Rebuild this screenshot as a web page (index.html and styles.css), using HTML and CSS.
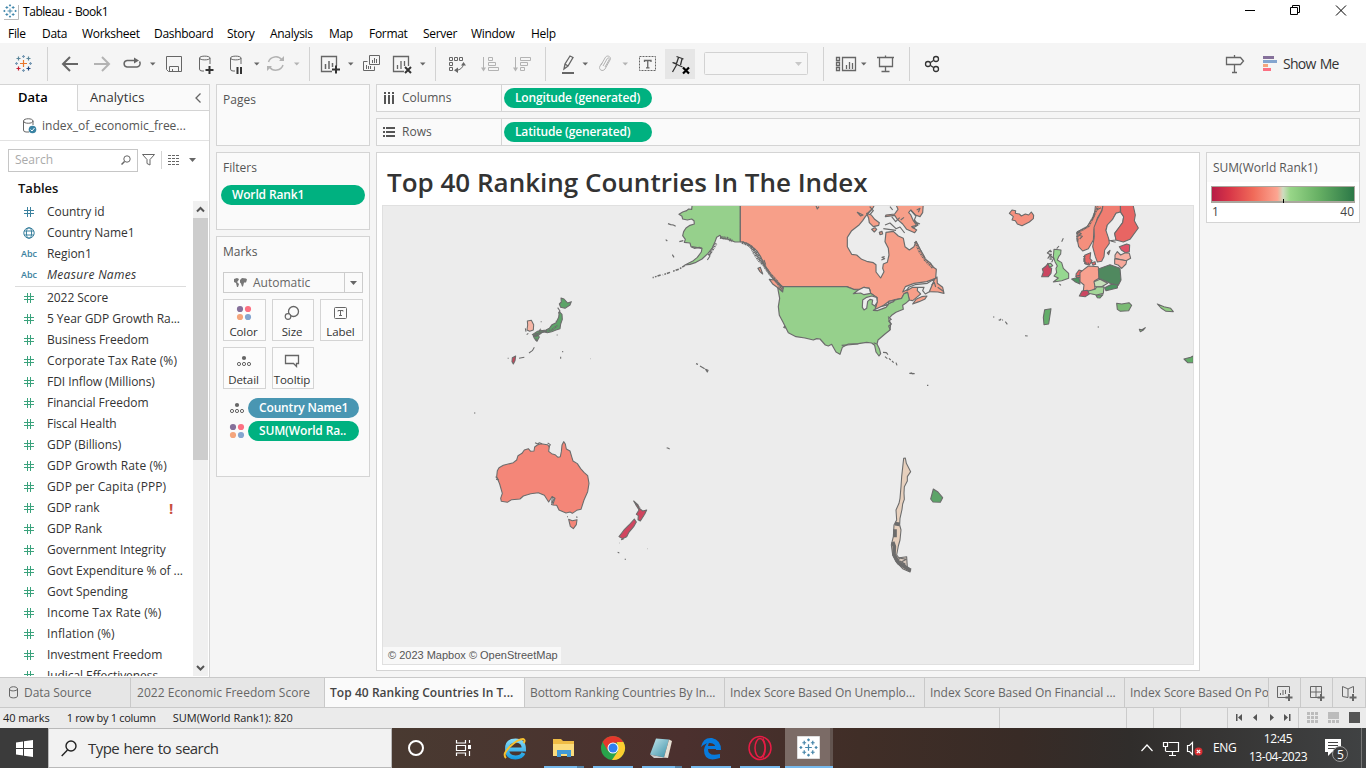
FILE: index.html
```html
<!DOCTYPE html>
<html lang="en">
<head>
<meta charset="utf-8">
<title>Tableau - Book1</title>
<link rel="stylesheet" href="styles.css">
</head>
<body>
<svg class="defs" aria-hidden="true">
  <defs>
    <symbol id="hash" viewBox="0 0 12 12"><path d="M4.500 1v10M7.500 1v10M1 4.500h10M1 7.500h10" fill="none" stroke="currentColor"/></symbol>
    <symbol id="globe" viewBox="0 0 12 12"><g fill="none" stroke="currentColor"><circle cx="6" cy="6" r="5.2"/><ellipse cx="6" cy="6" rx="2.6" ry="5.2"/><path d="M1 4h10M1 8h10"/></g></symbol>
    <symbol id="plus-burst" viewBox="0 0 20 20"><path d="M10 6.500v7M6.500 10h7M5.500 3v4M3.500 5h4M14.500 3v4M12.500 5h4M5.500 13v4M3.500 15h4M14.500 13v4M12.500 15h4M10 .5v3M8.500 2h3M10 16.500v3M8.500 18h3M2 8.500v3M.5 10h3M18 8.500v3M16.500 10h3" fill="none" stroke="currentColor" stroke-width="1.3"/></symbol>
    <symbol id="dots" viewBox="0 0 16 16"><circle cx="4" cy="4" r="3.100" fill="#85709a"/><circle cx="12" cy="4" r="3.100" fill="#fc7082"/><circle cx="4" cy="12" r="3.100" fill="#f4a57c"/><circle cx="12" cy="12" r="3.100" fill="#84a5cf"/></symbol>
    <symbol id="detail" viewBox="0 0 16 16"><circle cx="8" cy="5" r="2.100" fill="#666"/><g fill="none" stroke="#666"><circle cx="3" cy="11" r="1.600"/><circle cx="8" cy="11" r="1.600"/><circle cx="13" cy="11" r="1.600"/></g></symbol>
  </defs>
</svg>
<div class="app">
  <header class="titlebar">
    <svg class="app-icon" viewBox="0 0 16 16" width="16" height="16"><path d="M1 15.500h14.500V1" fill="none" stroke="#bbb"/><use href="#plus-burst" x="0" y="0" width="14" height="14" color="#3b82a8"/></svg>
    <span class="title-text">Tableau - Book1</span>
    <svg class="win-buttons" viewBox="1230 0 136 23" width="136" height="23" fill="none" stroke="#000"><path d="M1245 10.500h10M1290.500 7.500h7v7h-7zM1292.500 7v-1.500h7v7h-2M1336 5.500l10 10M1346 5.500l-10 10"/></svg>
  </header>
  <nav class="menu"><span>File</span><span>Data</span><span>Worksheet</span><span>Dashboard</span><span>Story</span><span>Analysis</span><span>Map</span><span>Format</span><span>Server</span><span>Window</span><span>Help</span></nav>

  <div class="toolbar">
    <svg viewBox="0 43 47 41"><g fill="none" stroke-width="1.200"><path d="M23.500 60v7M20 63.500h7" stroke="#e8762c"/><path d="M18.500 56.500v4M16.500 58.500h4M28.500 56.500v4M26.500 58.500h4" stroke="#5b879b"/><path d="M18.500 66.500v4M16.500 68.500h4" stroke="#c72035"/><path d="M28.500 66.500v4M26.500 68.500h4" stroke="#1f447e"/><path d="M23.500 55v3M22 56.500h3M16.500 62v3M15 63.500h3M30.500 62v3M29 63.500h3" stroke="#7b9bb5"/><path d="M23.500 69v3M22 70.500h3" stroke="#7b9bb5"/></g></svg>
    <i class="sep"></i>
    <svg viewBox="48 43 38 41"><path d="M78 64H63M70 57l-7 7 7 7" class="ink w2"/></svg>
    <svg viewBox="86 43 32 41"><path d="M94 64h15M102 57l7 7-7 7" class="pale w2"/></svg>
    <svg viewBox="118 43 27 41"><path d="M135 60.500h-8a3.500 3.300 0 0 0 0 6.500h10a3.500 3.500 0 0 0 2.500-5.500" class="ink w15"/><path d="M134 57.500v6l5-3z" fill="#666"/></svg>
    <svg viewBox="145 43 15 41"><path d="M150 62.500h5.500l-2.750 3z" fill="#666"/></svg>
    <svg viewBox="160 43 28 41"><path d="M166.500 56.500h15v15h-13l-2-2zM169.500 71.500v-5h9v5M172.500 69v2.500" class="ink"/></svg>
    <svg viewBox="188 43 34 41"><path d="M204 71h-2q-2.500 0-2.500-2V58c0-2.500 10.500-2.500 10.500 0v6M199.500 58c0 2.500 10.500 2.500 10.500 0" class="ink"/><path d="M209.500 66v8M205.500 70h8" stroke="#333" stroke-width="2"/></svg>
    <svg viewBox="222 43 26 41"><path d="M235 71h-2q-2.500 0-2.500-2V58c0-2.500 10.500-2.500 10.500 0v6M230.500 58c0 2.500 10.500 2.500 10.500 0" class="ink"/><path d="M237.500 67v7M241 67v7" stroke="#333" stroke-width="2"/></svg>
    <svg viewBox="248 43 15 41"><path d="M254 62.500h5.500l-2.750 3z" fill="#666"/></svg>
    <svg viewBox="263 43 25 41"><path d="M268.500 62a7.500 7 0 0 1 13.500-2M283 65a7.500 7 0 0 1-13.500 2" class="pale w15"/><path d="M279 61h5v-5zM272 66h-5v5z" fill="#b3b3b3"/></svg>
    <svg viewBox="288 43 21 41"><path d="M294 62.500h5.500l-2.750 3z" fill="#b3b3b3"/></svg>
    <i class="sep"></i>
    <svg viewBox="310 43 34 41"><path d="M332 71.500h-10.500v-15h15V66" class="ink w13"/><path d="M325.500 69v-5M329 69v-8M332.500 67v-4" class="ink w15"/><path d="M336 65.500v8M332 69.500h8" stroke="#333" stroke-width="2"/></svg>
    <svg viewBox="344 43 12 41"><path d="M348 62.500h5.500l-2.750 3z" fill="#666"/></svg>
    <svg viewBox="356 43 31 41"><path d="M369.500 55.500h10v9h-10zM367.500 61.500h-4v9h11v-4M372.500 63v-3M374.500 63v-5M376.500 63v-4M366.500 69v-4M368.500 69v-3M370.500 69v-3" class="ink"/></svg>
    <svg viewBox="387 43 29 41"><path d="M404 71.500h-10.500v-15h15V66M397.500 69v-4M401 69v-8M404.500 66v-5" class="ink w13"/><path d="M405 67l6 6M411 67l-6 6" stroke="#333" stroke-width="2"/></svg>
    <svg viewBox="416 43 19 41"><path d="M420 62.500h5.500l-2.750 3z" fill="#666"/></svg>
    <i class="sep"></i>
    <svg viewBox="436 43 38 41"><path d="M449.500 57.500h3v3h-3zM454.500 57.500h3v3h-3zM459.500 57.500h3v3h-3zM449.500 62.500h3v3h-3zM449.500 67.500h3v3h-3zM456 70.500q7-1 7.500-7" class="ink"/><path d="M458 67.500v5.500l-4-2.700zM461 65.500h5l-2.500-3.500z" fill="#666"/></svg>
    <svg viewBox="474 43 32 41"><path d="M483.500 57v12M488.500 57.500h4v3h-4zM488.500 62.500h7v3h-7zM488.500 67.500h10v3h-10z" class="pale"/><path d="M481 67.500h5l-2.500 4z" fill="#b3b3b3"/></svg>
    <svg viewBox="506 43 39 41"><path d="M515.500 57v12M520.500 57.500h10v3h-10zM520.500 62.500h7v3h-7zM520.500 67.500h4v3h-4z" class="pale"/><path d="M513 67.500h5l-2.500 4z" fill="#b3b3b3"/></svg>
    <i class="sep"></i>
    <svg viewBox="546 43 33 41"><path d="M564 69l1-5 5-8 3 1.500-5 8.500zM565 64l3 2" class="ink w13"/><path d="M562 73h12" stroke="#666" stroke-width="2"/></svg>
    <svg viewBox="579 43 14 41"><path d="M582.500 62.500h5.500l-2.750 3z" fill="#666"/></svg>
    <svg viewBox="593 43 24 41"><path d="M601 65l4-7c2-4 7-1 5 2l-5 9c-2 3-7 1-5-3l2-3M603 66l4-7c1-2 3-1 2 1l-4 7" class="pale"/></svg>
    <svg viewBox="617 43 17 41"><path d="M622.500 62.500h5.500l-2.750 3z" fill="#b3b3b3"/></svg>
    <svg viewBox="634 43 31 41"><path d="M639.500 56.500h16v14h-16z" class="ink" stroke-dasharray="2 1"/><path d="M644.500 62v-1.500h6.500V62M647.750 60.500v7.500M646 67.800h3.500" class="ink w13"/></svg>
    <svg class="pressed" viewBox="665 43 30 41"><path d="M676.500 56.500l7 2.500M678.500 57.500l-2 6M682 59l-1.500 6M672.500 62.500l10 4.500M676.500 63.500l-3.500-1M676.500 65l-4 7" class="dark w13"/><path d="M683 67.500l6 6M689 67.500l-6 6" stroke="#000" stroke-width="2.200"/></svg>
    <svg viewBox="695 43 128 41"><rect x="704.500" y="52.500" width="103" height="22" rx="1" fill="#f6f6f6" stroke="#d2d2d2"/><path d="M795 62h7l-3.500 4z" fill="#c8c8c8"/></svg>
    <i class="sep"></i>
    <svg viewBox="824 43 34 41"><path d="M836.500 57.500h3v3h-3zM836.500 62.500h3v3h-3zM836.500 67.500h3v3h-3zM842.500 57.500h13v13h-13zM846.500 69v-4M849.500 69v-7M852.500 69v-6" class="ink w13"/></svg>
    <svg viewBox="858 43 12 41"><path d="M861 62.500h5.500l-2.750 3z" fill="#666"/></svg>
    <svg viewBox="870 43 39 41"><path d="M877 57.500h17M879.500 57.500v9h13v-9M885.500 55.500v2M885.500 67v5M881.500 71.500h8" class="ink w13"/></svg>
    <i class="sep"></i>
    <svg viewBox="910 43 44 41"><path d="M930.500 62.500l3-2M930.500 65.500l3 2" class="dark w13"/><g class="dark w13"><circle cx="928" cy="64" r="2.500"/><circle cx="936" cy="59" r="2.500"/><circle cx="936" cy="69" r="2.500"/></g></svg>
    <span></span>
    <svg viewBox="1220 43 30 41"><path d="M1226.500 57.500h14l3 3.500-3 3.500h-14zM1234.500 55v2M1234.500 65v7.500M1232 72.500h5" class="ink w13"/></svg>
    <div class="showme"><svg viewBox="0 0 14 16" width="14" height="16"><path d="M0 0h11v3H0z" fill="#85709a"/><path d="M0 4h14v3H0z" fill="#84a5cf"/><path d="M0 8h5v3H0z" fill="#f4a57c"/><path d="M0 12h8v3H0z" fill="#fc7082"/></svg><span>Show Me</span></div>
  </div>

  <main class="workspace">
    <aside class="datapane">
      <div class="pane-tabs"><b>Data</b><div class="analytics"><span>Analytics</span><svg width="8" height="12" viewBox="0 0 8 12"><path d="M6.500 1.500L2 6l4.500 4.500" class="ink w13"/></svg></div></div>
      <div class="source"><svg width="14" height="16" viewBox="0 0 14 16"><path d="M6 14H3Q.5 14 .5 12V3C.5 0 10 0 10 3v4M.5 3c0 3 9.500 3 9.500 0" class="ink"/><circle cx="9.500" cy="11.500" r="3.800" fill="#3a83a3"/><path d="M7.500 11.500l1.500 1.500 2.500-3" fill="none" stroke="#fff"/></svg><span>index_of_economic_free...</span></div>
      <div class="searchrow"><div class="search"><span>Search</span><svg width="10" height="10" viewBox="0 0 10 10"><circle cx="6" cy="4" r="3.200" class="ink"/><path d="M3.500 6.500L.5 9.500" class="ink w15"/></svg></div>
        <svg width="60" height="18" viewBox="142 151 60 18"><path d="M142.500 154.500h12l-4.500 5v5.500l-3-1.500v-4z" class="ink"/><path d="M161.500 151v18" stroke="#d4d4d4"/><path d="M168 155.500h12M168 158.500h12M168 161.500h12M168 164.500h12" stroke="#666" stroke-dasharray="3 1"/><path d="M189 158h7l-3.500 4z" fill="#666"/></svg></div>
      <h3>Tables</h3>
      <div class="fieldwrap">
        <ul class="fields">
          <li class="dim"><svg><use href="#hash"/></svg><span>Country id</span></li>
          <li class="dim"><svg><use href="#globe"/></svg><span>Country Name1</span></li>
          <li class="dim"><em>Abc</em><span>Region1</span></li>
          <li class="dim last"><em>Abc</em><span class="it">Measure Names</span></li>
          <li><svg><use href="#hash"/></svg><span>2022 Score</span></li>
          <li><svg><use href="#hash"/></svg><span>5 Year GDP Growth Ra...</span></li>
          <li><svg><use href="#hash"/></svg><span>Business Freedom</span></li>
          <li><svg><use href="#hash"/></svg><span class="wide">Corporate Tax Rate (%)</span></li>
          <li><svg><use href="#hash"/></svg><span>FDI Inflow (Millions)</span></li>
          <li><svg><use href="#hash"/></svg><span>Financial Freedom</span></li>
          <li><svg><use href="#hash"/></svg><span>Fiscal Health</span></li>
          <li><svg><use href="#hash"/></svg><span>GDP (Billions)</span></li>
          <li><svg><use href="#hash"/></svg><span class="wide">GDP Growth Rate (%)</span></li>
          <li><svg><use href="#hash"/></svg><span class="wide">GDP per Capita (PPP)</span></li>
          <li><svg><use href="#hash"/></svg><span>GDP rank</span><b class="warn">!</b></li>
          <li><svg><use href="#hash"/></svg><span>GDP Rank</span></li>
          <li><svg><use href="#hash"/></svg><span>Government Integrity</span></li>
          <li><svg><use href="#hash"/></svg><span>Govt Expenditure % of ...</span></li>
          <li><svg><use href="#hash"/></svg><span>Govt Spending</span></li>
          <li><svg><use href="#hash"/></svg><span class="wide">Income Tax Rate (%)</span></li>
          <li><svg><use href="#hash"/></svg><span class="wide">Inflation (%)</span></li>
          <li><svg><use href="#hash"/></svg><span>Investment Freedom</span></li>
          <li><svg><use href="#hash"/></svg><span>Judical Effectiveness</span></li>
        </ul>
        <div class="scroll"><svg width="15" height="17" viewBox="0 0 15 17"><path d="M4 10.500L7.500 7l3.500 3.500" fill="none" stroke="#555" stroke-width="2"/></svg><i></i><svg width="15" height="17" viewBox="0 0 15 17"><path d="M4 7l3.500 3.500L11 7" fill="none" stroke="#555" stroke-width="2"/></svg></div>
      </div>
    </aside>

    <section class="cards">
      <div class="card pages"><h4>Pages</h4></div>
      <div class="card filters"><h4>Filters</h4><div class="pill">World Rank1</div></div>
      <div class="card marks"><h4>Marks</h4>
        <div class="marktype"><svg width="13" height="10" viewBox="0 0 13 10"><path d="M0 1l3-1 2 1-1 2-1 1 2 2-1 3-1 0-1-4-2-1zM6 2l2-2 4 .5 1 1-1 3-2 0-1 4-1 0-1-3-1-1z" fill="#777"/></svg><span>Automatic</span><i><svg width="7" height="4"><path d="M0 0h7L3.500 4z" fill="#666"/></svg></i></div>
        <div class="buttons">
          <div><svg width="16" height="16"><use href="#dots"/></svg><span>Color</span></div>
          <div><svg width="16" height="16" viewBox="0 0 16 16"><circle cx="9.500" cy="6.500" r="5" class="ink w13"/><circle cx="4" cy="11.500" r="2.800" fill="#fafafa" stroke="#666" stroke-width="1.200"/></svg><span>Size</span></div>
          <div><svg width="16" height="16" viewBox="0 0 16 16"><rect x="1.500" y="2.500" width="12" height="11" rx="1" class="ink"/><path d="M5 6.500v-1h5v1M7.500 5.500v5M6 10.500h3" class="ink"/></svg><span>Label</span></div>
          <div><svg width="16" height="16"><use href="#detail"/></svg><span>Detail</span></div>
          <div><svg width="16" height="16" viewBox="0 0 16 16"><path d="M1.500 2.500h13v8h-2v3l-3-3h-8z" class="ink w13"/></svg><span>Tooltip</span></div>
        </div>
        <div class="shelfrow"><svg width="16" height="16"><use href="#detail"/></svg><div class="pill blue">Country Name1</div></div>
        <div class="shelfrow"><svg width="16" height="16"><use href="#dots"/></svg><div class="pill">SUM(World Ra..</div></div>
      </div>
    </section>

    <section class="canvas">
      <div class="shelf"><div class="shelf-name"><svg width="12" height="13" viewBox="0 0 12 13"><path d="M1 0h2v2H1zM5 0h2v2H5zM9 0h2v2H9zM1 3h2v9H1zM5 3h2v9H5zM9 3h2v9H9z" fill="#555"/></svg><span>Columns</span></div><div class="pill">Longitude (generated)</div></div>
      <div class="shelf"><div class="shelf-name"><svg width="12" height="12" viewBox="0 0 12 12"><path d="M0 1h2v2H0zM0 5h2v2H0zM0 9h2v2H0zM3 1h9v2H3zM3 5h9v2H3zM3 9h9v2H3z" fill="#555"/></svg><span>Rows</span></div><div class="pill lat">Latitude (generated)</div></div>
      <div class="viewrow">
        <div class="sheet">
          <h1>Top 40 Ranking Countries In The Index</h1>
          <div class="mapbox">
          <svg class="map" viewBox="383 206 810 458" width="810" height="458">
            <g transform="translate(640 200) scale(.33333)" stroke="#6c6c6c" stroke-width="3.500" stroke-linejoin="round">
              <path fill="#96d08c" d="M157 10L155 28 146 27 140 32 128 36 117 43 126 49 128 57 142 60 155 57 162 62 163 72 150 76 138 84 131 95 128 107 136 118 133 127 150 129 153 140 163 145 178 142 186 145 184 156 172 172 160 182 135 195 150 193 168 187 186 177 204 160 217 144 225 125 230 112 240 106 246 115 262 117 275 122 285 126 301 126V10z"/>
              <path fill="#f79f89" d="M301 10V125L320 130 335 140 350 152 362 170 373 195 385 215 400 237 428 260H620L640 267 660 268 672 262 688 265 692 280 708 292 712 305 705 330 720 324 745 305 765 299 785 295 792 282 802 277 808 300 818 302 830 292 842 282 832 272 833 262 815 262 800 270 788 276 796 260 822 250 860 245 887 235 889 208 878 200 872 190 856 178 850 164 842 150 828 124 822 140 808 150 795 140 790 115 775 108 760 94 738 97 735 125 745 145 747 165 742 187 730 192 728 205 732 215 722 234 708 216V194L700 188 680 184 665 178 650 165 635 163 622 140V112L635 92 658 74 668 62 676 50 688 36 700 22 705 10z"/>
              <path fill="#f79f89" d="M680 40L686 55 688 68 700 80 716 76 718 68 704 58 694 45zM736 50L764 46 772 58 788 72 800 88 824 98 830 90 815 80 830 76 820 62 812 44 806 38 812 30 826 45 840 50 848 38 850 10H766L774 28 764 42 738 45zM652 37l17 8-7 3zM695 88l10-5 5 5-7 8zM718 97l8-3 2 8-8 2zM867 275l14-35 10-9 1 19 16 12 4 18-18-4zM818 312l10-14 17-8 16-2-7 10-17 7zM354 205l7-3 7 20-8-7zM388 238l15 2 28 24-3 10-29-21z"/>
              <path fill="#ececec" d="M800 272L806 262 825 254 862 250 884 236 868 275 856 282 848 272 852 262 838 262 818 262z"/>
              <path fill="#96d08c" d="M413 263L428 276 430 260H620L640 268 655 270 688 265 692 280 712 293 705 330 745 312 765 300 785 295 792 281 803 277 808 300 797 310 788 316 790 328 768 337 755 346 746 356 752 372 750 390 735 402 714 420 711 432 718 446 722 461 717 468 708 456 704 436 695 429 680 427 655 431 625 432 607 442 600 463 588 456 575 433 565 438 556 435 540 417 530 416 520 420 495 414 468 410 445 398 430 368 418 346 415 320 419 295z"/>
              <path fill="#ececec" d="M640 281L655 270 672 262 688 265 692 280 672 284 662 279zM668 300L680 292 695 288 710 292 712 306 704 318 696 312 698 300 690 298 683 304 680 325 672 330 667 322zM700 331L722 320 745 314 738 322 712 332zM745 310l14-4 5-5-18 3z"/>
              <g fill="none">
              <path d="M135 196l-17 11-20 7M90 217l-22 8M62 225l-24 8" stroke-dasharray="10 3 5 4" stroke-width="4.500"/>
              <path d="M84 71l8 3 8 1 7 4M77 119l5 4M97 164l5 8M118 125l12-3M202 180l8-12M207 167l8-12M168 491l6 2M180 498l14 8M197 508l7 3-2 5zM710 432l-9-4M729 457l10 1 5 6M735 470l7 6M747 475l5 5M756 483l5 5M768 488l3 8M808 520l16 1M812 518l8 5M861 556h4M528 17l4 10 5-7M372 180l5 14M744 350l10 8-8 5 8 9-8 6 5 12M812 30l16 18-6 14 12 13-16 10M830 30l10-5-5 12M689 20l11 12-9 10M875 255l8-8 4 14M893 262l17 12M724 180l10-4-8-4 8-2M605 436l50-4M155 140l30 5M680 42l15-13M755 50l12 15 12-12M735 75l15-6 18 17 12-5 14 18M730 86l38 5M435 378l-4 4 6 3M822 58l8 10 10 4M782 60l10-8M750 20l8 10"/>
              <path d="M306 127L325 134 342 148 354 166 366 184 376 202 390 222 408 242 428 268" stroke-width="9" stroke-dasharray="5 1.500 3 1"/>
              <path d="M332 138L342 158 356 180 368 192M206 166L216 150 228 130M240 112l22 3 14 8M826 125l14 30 16 25 24 24" stroke-width="9" stroke-dasharray="4 2 2 2"/>
              </g>
            </g>
            <g transform="translate(980 200) scale(.33333)" stroke="#696969" stroke-width="3.200" stroke-linejoin="round">
              <path fill="#f58f7d" d="M88 40L96 30 107 32 106 40 118 42 124 48 136 42 146 45 154 36 161 46 160 56 148 66 126 77 112 72 106 62 96 60 100 50z"/>
              <path fill="#f58f7d" d="M347 10L343 48 330 66 320 82 292 95 291 115 296 140 308 153 325 146 340 120 342 90 352 55 366 30 370 10z"/>
              <path fill="#f07d71" d="M370 10L366 32 352 58 342 82 343 110 338 140 346 170 352 186 365 184 372 170 374 150 388 130 386 110 378 90 382 75 398 58 408 40 421 36V10z"/>
              <path fill="#ececec" d="M421 36L431 50 428 68 416 84 404 100 408 120 388 122 378 92 382 75 398 58 408 40z"/>
              <path fill="#e86563" d="M421 10L422 36 431 50 428 68 416 84 404 100 408 120 430 126 450 118 475 84 463 62 466 45 458 10z"/>
              <path fill="#df5266" d="M418 140L440 132 449 135 448 155 436 158 424 150z"/>
              <path fill="#e86563" d="M314 166L328 160 332 158 330 176 336 182 328 195 316 192 313 180zM335 188l10-3 2 8-8 3zM382 159l8-8-4 13zM288 222L297 210 305 212 303 232 290 234z"/>
              <path fill="#f7b0a3" d="M405 165L412 155 422 165 436 158 448 160 452 175 438 182 405 175z"/>
              <path fill="#f7a89a" d="M404 176L440 182 438 192 425 205 414 195 404 192z"/>
              <path fill="#f7a18f" d="M300 218L312 208 325 198 354 200 358 210 357 235 343 243 345 265 335 273 310 272 312 255 300 245z"/>
              <path fill="#50895f" d="M355 207L390 194 420 205 423 240 415 256 390 250 357 235z"/>
              <path fill="#c5dfb9" d="M342 245L360 238 383 250 365 260 345 260z"/>
              <path fill="#a3d698" d="M325 273L345 268 350 261 372 260 370 280 350 285 325 280z"/>
              <path fill="#96d890" d="M222 148L243 150 242 162 236 170 232 180 245 188 250 205 266 220 266 235 245 242 220 246 235 234 222 228 230 218 228 205 232 198 225 185 220 170zM203 192L212 190 218 197 208 202z"/>
              <path fill="#4c9460" d="M275 237L297 232 300 252 285 245zM374 263L395 253 413 255 412 264 378 272z"/>
              <path fill="#cb4661" d="M185 230L190 216 187 207 198 198 204 190 208 202 215 205 213 220 205 230zM298 288L306 273 322 271 328 282 316 290z"/>
              <path fill="#63ad69" d="M194 329L213 326 206 372 192 374 190 352zM348 286L369 284 360 294 352 293zM612 477l20-5 8-4v20h-17z"/>
              <path fill="#7aba74" d="M410 310l15 2 22-4 8 8-9 16-25 2-9-6z"/>
              <path fill="#91cd83" d="M532 312l20 8 20 5 8 10-22-1-15-10z"/>
              <path fill="#88c27f" d="M478 388l8 1 10-6-7 8-8 4z"/>
              <path fill="none" d="M250 115l-5 10M237 138l-7 8M212 150l-10 9 9 5-8 12M210 165l11 10-6 12M238 252l5 4M39 351h4M56 359l4 2 3-5M66 359l3 2M76 365l6 8M135 407l8 1M353 381h4M292 95l12 6-9 5 12 3-8 8M350 30l13-7M337 60l7-25M285 229l15-3M392 123l15 4"/>
              <path fill="none" d="M356 14L338 55 326 78 292 98 293 125M313 168v20l14 4M212 152v30" stroke-width="7" stroke-dasharray="4 2 2 2"/>
            </g>
            <g transform="translate(460 280) scale(.33333)" stroke="#6c6c6c" stroke-width="3.200" stroke-linejoin="round">
              <path fill="#f48678" d="M112 572L117 563 130 556 160 548 170 540 174 527 186 520 193 510 205 506 212 514 222 513 224 501 232 495 243 491 262 494 268 500 266 514 275 521 285 524 294 532 301 530 304 515 306 495 311 485 316 492 319 507 330 513 335 530 339 543 352 551 362 566 372 577 383 587 387 610 383 635 372 660 363 688 350 691 337 700 330 696 318 699 297 690 290 676 278 675 285 655 276 650 266 666 253 646 235 638 212 641 190 648 180 657 155 659 142 667 124 664 122 655 127 640 119 612 110 590zM326 718l11 4 14-3-2 15-9 12-9-7z"/>
              <path fill="#5ca468" d="M303 54l9 3 11 12 11-4-4 10-15 10-13-3-4-10 6-6zM298 95L306 103 307 118 302 132 300 146 288 150 275 155 262 158 250 155 238 164 226 170 217 164 232 154 258 150 268 145 276 134 288 128 296 112zM220 168l12-4 6 7-7 13-8-9z"/>
              <path fill="#f6b5a5" d="M202 123l12-2 7 13-1 16-11 4-8-4 2-15z"/>
              <path fill="#c84559" d="M157 233l10-5-2 14-5 10-4-7z"/>
              <path fill="#d1455f" d="M521 663L534 675 538 685 548 693 560 690 554 703 541 723 534 719 535 707 529 703 537 690 533 683zM523 717L529 726 521 740 506 758 500 770 487 776 477 770 492 750 507 735z"/>
              <path fill="none" d="M293 83l7 10-5 7M223 163l39-10M227 182l2-7M223 202l-6 10-10 7M177 235l16-3M143 235h3M302 230v6M308 213v4M391 236h1M42 399h4M620 503l5 2 4 2M473 817l5 2M494 838h4M562 806h1M478 789h1M321 710h3M350 709l1 5M107 590l8 9M108 598l9 2M225 488l9 4 4-4 8 3M263 489l8 5-5 8M275 670l2-20 6 5-9 20M198 155l-2-10M287 124h3M242 125h3M483 779l8-2M242 146l-5 8 8-3M205 160l-5 4M290 165h3"/>
              <path fill="none" d="M220 166l30-12 25-4 18-14M528 672l12 14" stroke-width="6" stroke-dasharray="4 2 2 2"/>
            </g>
            <g transform="translate(870 430) scale(.33333)" stroke="#6c6c6c" stroke-width="3.200" stroke-linejoin="round">
              <path fill="#e7d0bd" d="M101 85L106 84 109 100 122 125 112 140 112 153 103 170 102 190 103 208 98 222 96 238 90 265 89 285 93 300 90 330 85 348 80 375 92 390 110 413 122 420 120 426 98 416 78 395 68 375 64 345 70 320 72 285 80 270 78 240 87 220 90 205 93 170 95 140z"/>
              <path fill="#5ca468" d="M190 177l14 9 14 17-7 14-22-1-7-9z"/>
              <path fill="#d9c9bd" d="M88 383l22-3 2 32-28-13z"/>
              <path fill="none" d="M75 281l14 2M75 298v24M68 336l5 13-1 25 14 25 22 14 14 8" stroke-width="11"/>
              <path fill="none" d="M87 384l22 4-15 8 12 6M90 393l18 14"/>
            </g>
          </svg><span class="copyright">© 2023 Mapbox © OpenStreetMap</span>
          </div>
        </div>
        <div class="legend"><h4>SUM(World Rank1)</h4><div class="ramp"></div><div class="range"><span>1</span><span>40</span></div></div>
      </div>
    </section>
  </main>

  <div class="sheettabs">
    <div><svg width="9" height="13" viewBox="0 0 9 13"><path d="M.5 3v7c0 2.500 8 2.500 8 0V3c0-3-8-3-8 0s8 2 8 0" class="ink"/></svg><span>Data Source</span></div>
    <div><span class="t2">2022 Economic Freedom Score</span></div>
    <div class="active"><span>Top 40 Ranking Countries In T...</span></div>
    <div><span>Bottom Ranking Countries By In...</span></div>
    <div><span>Index Score Based On Unemplo...</span></div>
    <div><span>Index Score Based On Financial ...</span></div>
    <div class="cut"><span>Index Score Based On Po</span></div>
    <div class="add"><svg width="16" height="16" viewBox="0 0 16 16"><path d="M9 12.500H.5v-11h12V8M3.500 10V8M6 10V5M8.500 9V5" class="ink"/><path d="M12 9v7M8.500 12.500h7" class="ink w2"/></svg></div>
    <div class="add"><svg width="16" height="16" viewBox="0 0 16 16"><path d="M9 12.500H1.500v-11h11V9M7 1.500v11M1.500 7h11" class="ink"/><path d="M12 9v7M8.500 12.500h7" class="ink w2"/></svg></div>
    <div class="add"><svg width="16" height="16" viewBox="0 0 16 16"><path d="M7 12.500l-5.500-1v-10L5 3l2 1 2-1 3.500-1.500V8M7 4v8.500" class="ink"/><path d="M12 9v7M8.500 12.500h7" class="ink w2"/></svg></div>
  </div>
  <div class="status"><span>40 marks</span><span>1 row by 1 column</span><span>SUM(World Rank1): 820</span>
    <svg viewBox="999 708 367 20" width="367" height="20"><path d="M999.500 708v20M1126.500 708v20M1153.500 708v20M1180.500 708v20M1227.500 708v20M1298.500 708v20" stroke="#cbcbcb"/><path d="M1236 714h1.500v7h-1.500zM1242 714v7l-4-3.500zM1257 714v7l-4-3.500zM1270 714v7l4-3.500zM1284 714v7l4-3.500zM1289 714h1.500v7H1289z" fill="#555"/><path d="M1307 712h3v3h-3zM1311 712h3v3h-3zM1315 712h3v3h-3zM1307 716h3v3h-3zM1311 716h3v3h-3zM1315 716h3v3h-3zM1307 720h3v3h-3zM1311 720h3v3h-3zM1315 720h3v3h-3zM1328 712h11v7h-11zM1328 720h3v3h-3zM1332 720h3v3h-3zM1336 720h3v3h-3z" fill="#bcbcbc"/><path d="M1349 712h11v11h-11z" fill="#555"/></svg>
  </div>

  <footer class="taskbar">
    <div class="start"><svg width="17" height="17" viewBox="0 0 17 17"><path d="M0 2.500l7-1V8H0zM8 1.300L17 0v8H8zM0 9h7v6.500l-7-1zM8 9h9v8l-9-1.300z" fill="#fff"/></svg></div>
    <div class="winsearch"><svg width="16" height="17" viewBox="0 0 16 17"><circle cx="10" cy="6" r="5" fill="none" stroke="#222" stroke-width="1.400"/><path d="M6.500 10L.7 16" stroke="#222" stroke-width="1.400"/></svg><span>Type here to search</span></div>
    <svg class="apps" viewBox="392 728 442 40" width="442" height="40">
      <defs><linearGradient id="gie" gradientUnits="userSpaceOnUse" x1="0" y1="738" x2="0" y2="759"><stop stop-color="#8de0fb"/><stop offset="1" stop-color="#159be0"/></linearGradient><linearGradient id="gnote" x1="0" x2="1" y2="1"><stop stop-color="#c5e8ee"/><stop offset="1" stop-color="#3b8fa6"/></linearGradient></defs>
      <circle cx="416" cy="748" r="7" fill="none" stroke="#fff" stroke-width="2"/>
      <path d="M456.500 740v3h9v-3M456.500 756v-3h9v3M456.500 745.500h9v5h-9zM469.500 740v3M469.500 751v5" fill="none" stroke="#fff" stroke-width="1.200"/><path d="M468 745h3v4h-3z" fill="#fff"/>
      <path d="M508 749.500h16q0-9-8.500-9t-8.500 8.500 8.500 8.500q6 0 8-4.500" fill="none" stroke="url(#gie)" stroke-width="4"/><path d="M506 758q-4-4 4-11.500 8-7.500 13-7.500 3 1 .5 4" fill="none" stroke="#f5c032" stroke-width="2"/>
      <path d="M553 739h8l2 2h11v15h-21z" fill="#efbc45"/><path d="M553 744h21v12h-21z" fill="#fbdc7d"/><path d="M557 757v-7h14v7h-4v-3h-6v3z" fill="#429ad7"/>
      <circle cx="613" cy="748" r="12" fill="#28a44b"/><path d="M602.600 742a12 12 0 0 1 20.800 0L613 743l-5 8z" fill="#e5372c"/><path d="M623.400 742a12 12 0 0 1-11.400 18l6-9-1-9z" fill="#fccd30"/><circle cx="613" cy="748" r="5.500" fill="#fff"/><circle cx="613" cy="748" r="4.500" fill="#317ff0"/>
      <path d="M656 738.500l13 1-5 18-14-3z" fill="url(#gnote)"/><path d="M669 739.500l3 1.500-4 17-4-.500z" fill="#e7e0d4"/><path d="M650 754.500l14 3 4 .5-14 0z" fill="#ccc"/>
      <path d="M703 747q3-8 10-7 7 1 7 9h-12q0 8 12 5v4q-16 5-16-8 1-7 6-8-2 2-2 4h7q-1-4-4-4-6 0-8 5zM701 747q2-10 11-9 9 2 9 12h-5q0-7-6-7-5 0-9 4z" fill="#087bdd"/>
      <ellipse cx="760" cy="748" rx="11" ry="11.500" fill="none" stroke="#e81c45" stroke-width="1.500"/><ellipse cx="760" cy="748" rx="5" ry="9.500" fill="none" stroke="#e81c45" stroke-width="1.500"/><path d="M763 738q5 10 0 20" fill="none" stroke="#e81c45"/>
      <path d="M785 728h45v40h-45z" fill="#7b6b66"/><path d="M830 728h3v40h-3z" fill="#62544f"/><path d="M797.500 736.500h22v22h-22z" fill="#fff" stroke="#ddd"/><use href="#plus-burst" x="799" y="738" width="19" height="19" color="#4585a9"/>
      <path d="M544 766h33v2h-33zM593 766h40v2h-40zM642 766h33v2h-33zM691 766h40v2h-40zM740 766h40v2h-40zM785 766h48v2h-48z" fill="#76b9ed"/><path d="M577 766h7v2h-7zM675 766h7v2h-7z" fill="#5484a9"/>
    </svg>
    <div class="tray">
      <svg viewBox="1138 728 70 40" width="70" height="40" fill="none" stroke="#fff" stroke-width="1.200"><path d="M1141.500 751l5.500-6 5.500 6M1168.500 742.500h10v9h-13M1172.500 752v3M1169 755.500h7M1163.500 742.500h4v4h-4zM1165.500 747v4M1187.500 745.500h2l3-3v12l-3-3h-2z"/><circle cx="1198.500" cy="751.500" r="4" fill="#d92e32" stroke="none"/><path d="M1196.800 749.800l3.400 3.400M1200.200 749.800l-3.400 3.400"/></svg>
      <span class="lang">ENG</span><div class="clock"><span>12:45</span><span>13-04-2023</span></div>
      <svg class="note" width="30" height="30" viewBox="0 0 30 30"><path d="M2 3h16v13h-9l-4 4v-4H2z" fill="#fff"/><path d="M5 6.500h10M5 9.500h10M5 12.500h7" stroke="#444"/><circle cx="17" cy="18" r="7.500" fill="#3c3c3c" stroke="#999"/><text x="14" y="22.500" class="badge">5</text></svg>
      <i class="desk"></i>
    </div>
  </footer>
</div>
</body>
</html>
```
FILE: styles.css
```css
* { box-sizing: border-box; }
body { margin: 0; width: 1366px; height: 768px; overflow: hidden; font: 12px/16px "Open Sans", sans-serif; color: #333; }
h1, h3, h4, ul { margin: 0; padding: 0; font-weight: normal; }
.defs { position: absolute; width: 0; height: 0; }
.app { display: grid; grid-template-rows: 23px 20px 41px 593px 31px 20px 40px; width: 1366px; height: 768px; background: #f5f5f5; }
.ink { fill: none; stroke: #666; }
.pale { fill: none; stroke: #b3b3b3; }
.dark { fill: none; stroke: #333; }
.w13 { stroke-width: 1.3; }
.w15 { stroke-width: 1.5; }
.w2 { stroke-width: 2; }

.titlebar { display: flex; align-items: center; background: #fff; color: #000; }
.app-icon { margin: 0 4px 0 3px; }
.title-text { letter-spacing: -.45px; word-spacing: 1px; padding-top: 1px; }
.win-buttons { margin-left: auto; }
.menu { display: grid; grid-template-columns: 34px 40px 72px 73px 43px 59px 40px 54px 48px 60px 40px; align-items: center; padding: 2px 0 0 8px; background: #fff; color: #000; letter-spacing: -.3px; }

.toolbar { display: grid; grid-template-columns: 47px 1px 38px 32px 27px 15px 28px 34px 26px 15px 25px 21px 1px 34px 12px 31px 29px 19px 1px 38px 32px 39px 1px 33px 14px 24px 17px 31px 30px 128px 1px 34px 12px 39px 1px 44px 1fr 30px 116px; height: 41px; }
.toolbar > svg { width: 100%; height: 41px; }
.toolbar > .pressed { background: linear-gradient(#e6e6e6, #e6e6e6) 0 6px / 30px 30px no-repeat; }
.sep { margin: 4px 0 3px; background: #d2d2d2; }
.showme { display: flex; align-items: center; gap: 6px; padding-left: 13px; font-size: 14px; letter-spacing: -.75px; word-spacing: 1px; }
.showme span { letter-spacing: -.7px; }

.workspace { display: grid; grid-template-columns: 210px 154px 984px; column-gap: 6px; min-height: 0; }
.datapane { display: flex; flex-direction: column; height: 593px; overflow: hidden; background: #fff; border-top: 1px solid #d4d4d4; border-right: 1px solid #d4d4d4; }
.pane-tabs { display: grid; grid-template-columns: 77px 1fr; height: 26px; flex: none; line-height: 25px; font-size: 13px; color: #000; }
.pane-tabs b { padding-left: 18px; font-weight: 600; }
.analytics { display: flex; justify-content: space-between; align-items: center; padding: 0 7px 0 12px; background: #fafafa; border: solid #d4d4d4; border-width: 0 0 1px 1px; color: #333; }
.analytics span { letter-spacing: .1px; }
.source { display: flex; align-items: center; gap: 5px; flex: none; height: 30px; padding-left: 23px; border-bottom: 1px solid #e2e2e2; color: #555; }
.searchrow { display: flex; align-items: center; gap: 4px; flex: none; height: 38px; padding-left: 8px; }
.search { display: flex; align-items: center; justify-content: space-between; width: 130px; height: 23px; padding: 0 6px; border: 1px solid #c6c6c6; color: #aaa; }
.datapane h3 { flex: none; height: 22px; padding-left: 18px; font-size: 13px; line-height: 18px; font-weight: 600; color: #111; }
.fieldwrap { display: grid; grid-template-columns: 193px 15px; flex: 1; min-height: 0; overflow: hidden; }
.fields { list-style: none; color: #333; overflow: hidden; height: 475px; }
.fields li { display: grid; grid-template-columns: 47px 1fr; align-items: center; height: 21px; color: #3aa27c; white-space: nowrap; letter-spacing: -.06px; }
.fields li svg { width: 12px; height: 12px; margin-left: 23px; }
.fields li span { color: #333; }
.fields li .wide { letter-spacing: .1px; }
.fields li .it { font-style: italic; font-weight: 400; letter-spacing: .3px; }
.fields li em { padding-left: 21px; font: 600 9px/16px "Open Sans", sans-serif; letter-spacing: 0; }
.fields li.dim { color: #3b819e; }
.fields li.last { height: 23px; padding-bottom: 2px; margin: 0 7px 0 0; background: linear-gradient(#dcdcdc, #dcdcdc) 15px 22px / 172px 1px no-repeat; }
.fields li:has(.warn) { grid-template-columns: 47px 122px 12px; }
.warn { color: #c8503f; font-size: 15px; }
.scroll { display: flex; flex-direction: column; background: #f0f0f0; height: 475px; }
.scroll i { height: 242px; margin-bottom: auto; background: #cdcdcd; }

.cards { display: grid; grid-template-rows: 62px 78px 241px; row-gap: 6px; align-content: start; }
.card { padding: 7px 4px; background: #fafafa; border: 1px solid #d4d4d4; }
.card h4 { height: 16px; padding-left: 2px; color: #555; }
.pill { height: 20px; padding: 0 11px; border-radius: 10px; background: #00b180; color: #fff; line-height: 19px; font-weight: 600; white-space: nowrap; letter-spacing: -.15px; }
.blue { background: #4996b2; }
.filters .pill { margin-top: 9px; }
.marktype { display: flex; align-items: center; width: 140px; height: 21px; margin: 12px 0 0 2px; padding-left: 10px; border: 1px solid #ccc; color: #666; }
.marktype span { padding-left: 6px; }
.marktype i { display: flex; align-items: center; justify-content: center; width: 18px; height: 19px; margin-left: auto; border-left: 1px solid #ccc; }
.buttons { display: grid; grid-template-columns: 43px 42px 43px; gap: 6px; margin: 6px 0 0 2px; }
.buttons div { display: flex; flex-direction: column; align-items: center; height: 42px; padding: 5px 2px 0 0; border: 1px solid #d4d4d4; background: #fcfcfc; color: #333; }
.buttons span { line-height: 16px; margin-top: 3px; font-size: 11.500px; letter-spacing: -.1px; }
.shelfrow { display: flex; align-items: center; gap: 3px; height: 23px; padding-left: 8px; }
.buttons + .shelfrow { margin-top: 7px; }
.shelfrow .pill { width: 111px; }

.canvas { display: grid; grid-template-rows: 28px 28px 519px; row-gap: 6px; align-content: start; }
.shelf { display: flex; align-items: center; background: #fafafa; border: 1px solid #d4d4d4; }
.shelf-name { display: flex; align-items: center; gap: 7px; width: 125px; height: 26px; padding-left: 6px; margin-right: 2px; border-right: 1px solid #d4d4d4; color: #555; }
.shelf .pill { width: 148px; }
.viewrow { display: grid; grid-template-columns: 824px 154px; column-gap: 6px; align-items: start; }
.sheet { height: 519px; padding: 0 5px; background: #fff; border: 1px solid #d4d4d4; }
.sheet h1 { height: 52px; padding: 11px 0 0 5px; font-size: 26px; line-height: 36px; font-weight: 600; color: #333; white-space: nowrap; letter-spacing: 0; }
.mapbox { display: grid; width: 812px; height: 460px; background: #ececec; border: 1px solid #e0e0e0; }
.map { grid-area: 1 / 1; display: block; }
.copyright { grid-area: 1 / 1; align-self: end; justify-self: start; padding: 0 3px 0 5px; background: #f8f8f8; color: #555; font: 11px/17px "Liberation Sans", sans-serif; }
.legend { height: 71px; background: #fff; border: 1px solid #d4d4d4; }
.legend h4 { height: 29px; padding: 7px 0 0 6px; background: #fafafa; color: #555; }
.ramp { width: 144px; height: 17px; margin: 4px 0 0 4px; border: solid #aaa79e; border-width: 1px 1px 2px; background: linear-gradient(90deg, #b71d47, #d73547 12%, #f06a59 29%, #fca591 46%, #cfdcc0 50%, #98d688 55%, #67b064 75%, #2c7847); }
.ramp::after { content: ""; display: block; width: 1px; height: 4px; margin: 12px 0 0 71px; background: #000; }
.range { display: flex; justify-content: space-between; padding: 1px 5px; color: #444; }

.sheettabs { display: grid; grid-template-columns: 131px 194px 200px 200px 200px 200px 144px 32px 32px 33px; background: #e6e6e6; border-top: 1px solid #c9c9c9; border-bottom: 1px solid #c9c9c9; }
.sheettabs div { display: flex; align-items: center; gap: 6px; min-width: 0; overflow: hidden; border-right: 1px solid #c9c9c9; padding-left: 5px; color: #666; white-space: nowrap; letter-spacing: -.05px; }
.sheettabs div:first-child { padding-left: 9px; gap: 6px; }
.sheettabs .t2 { padding-left: 1px; letter-spacing: .03px; }
.sheettabs .active { background: #fafafa; color: #444; font-weight: 600; letter-spacing: .05px; }
.sheettabs .cut { letter-spacing: -.05px; }
.sheettabs .add { justify-content: center; padding: 0; }
.status { display: flex; align-items: center; gap: 17px; padding-left: 3px; background: #ebebeb; font-size: 11px; color: #222; letter-spacing: -.08px; }
.status span + span { letter-spacing: -.3px; }
.status span + span + span { letter-spacing: -.02px; }
.status svg { margin-left: auto; }

.taskbar { display: grid; grid-template-columns: 48px 344px 442px 1fr; background: linear-gradient(90deg, #3b3b3b 0, #3b3b3b 48px, #493a31 392px, #4b302e 683px, #402e27 860px, #382b26 1020px, #302d2b 1130px, #404243 1366px); }
.start { display: flex; align-items: center; justify-content: center; }
.winsearch { display: flex; align-items: center; gap: 11px; padding-left: 12px; background: #f2f2f2; border: 1px solid #b9b9b9; color: #333; font-size: 15px; letter-spacing: -.56px; word-spacing: 1px; }
.tray { display: flex; align-items: center; justify-content: flex-end; color: #fff; }
.tray svg { flex: none; }
.lang { width: 35px; padding-left: 5px; letter-spacing: -.3px; }
.clock { display: flex; flex-direction: column; align-items: center; width: 70px; line-height: 18px; letter-spacing: -.45px; white-space: nowrap; }
.note { margin: 6px 8px 0 10px; }
.desk { width: 1px; height: 40px; margin-right: 4px; background: #777; }
.badge { fill: #fff; font: 12px "Open Sans", sans-serif; }
```
